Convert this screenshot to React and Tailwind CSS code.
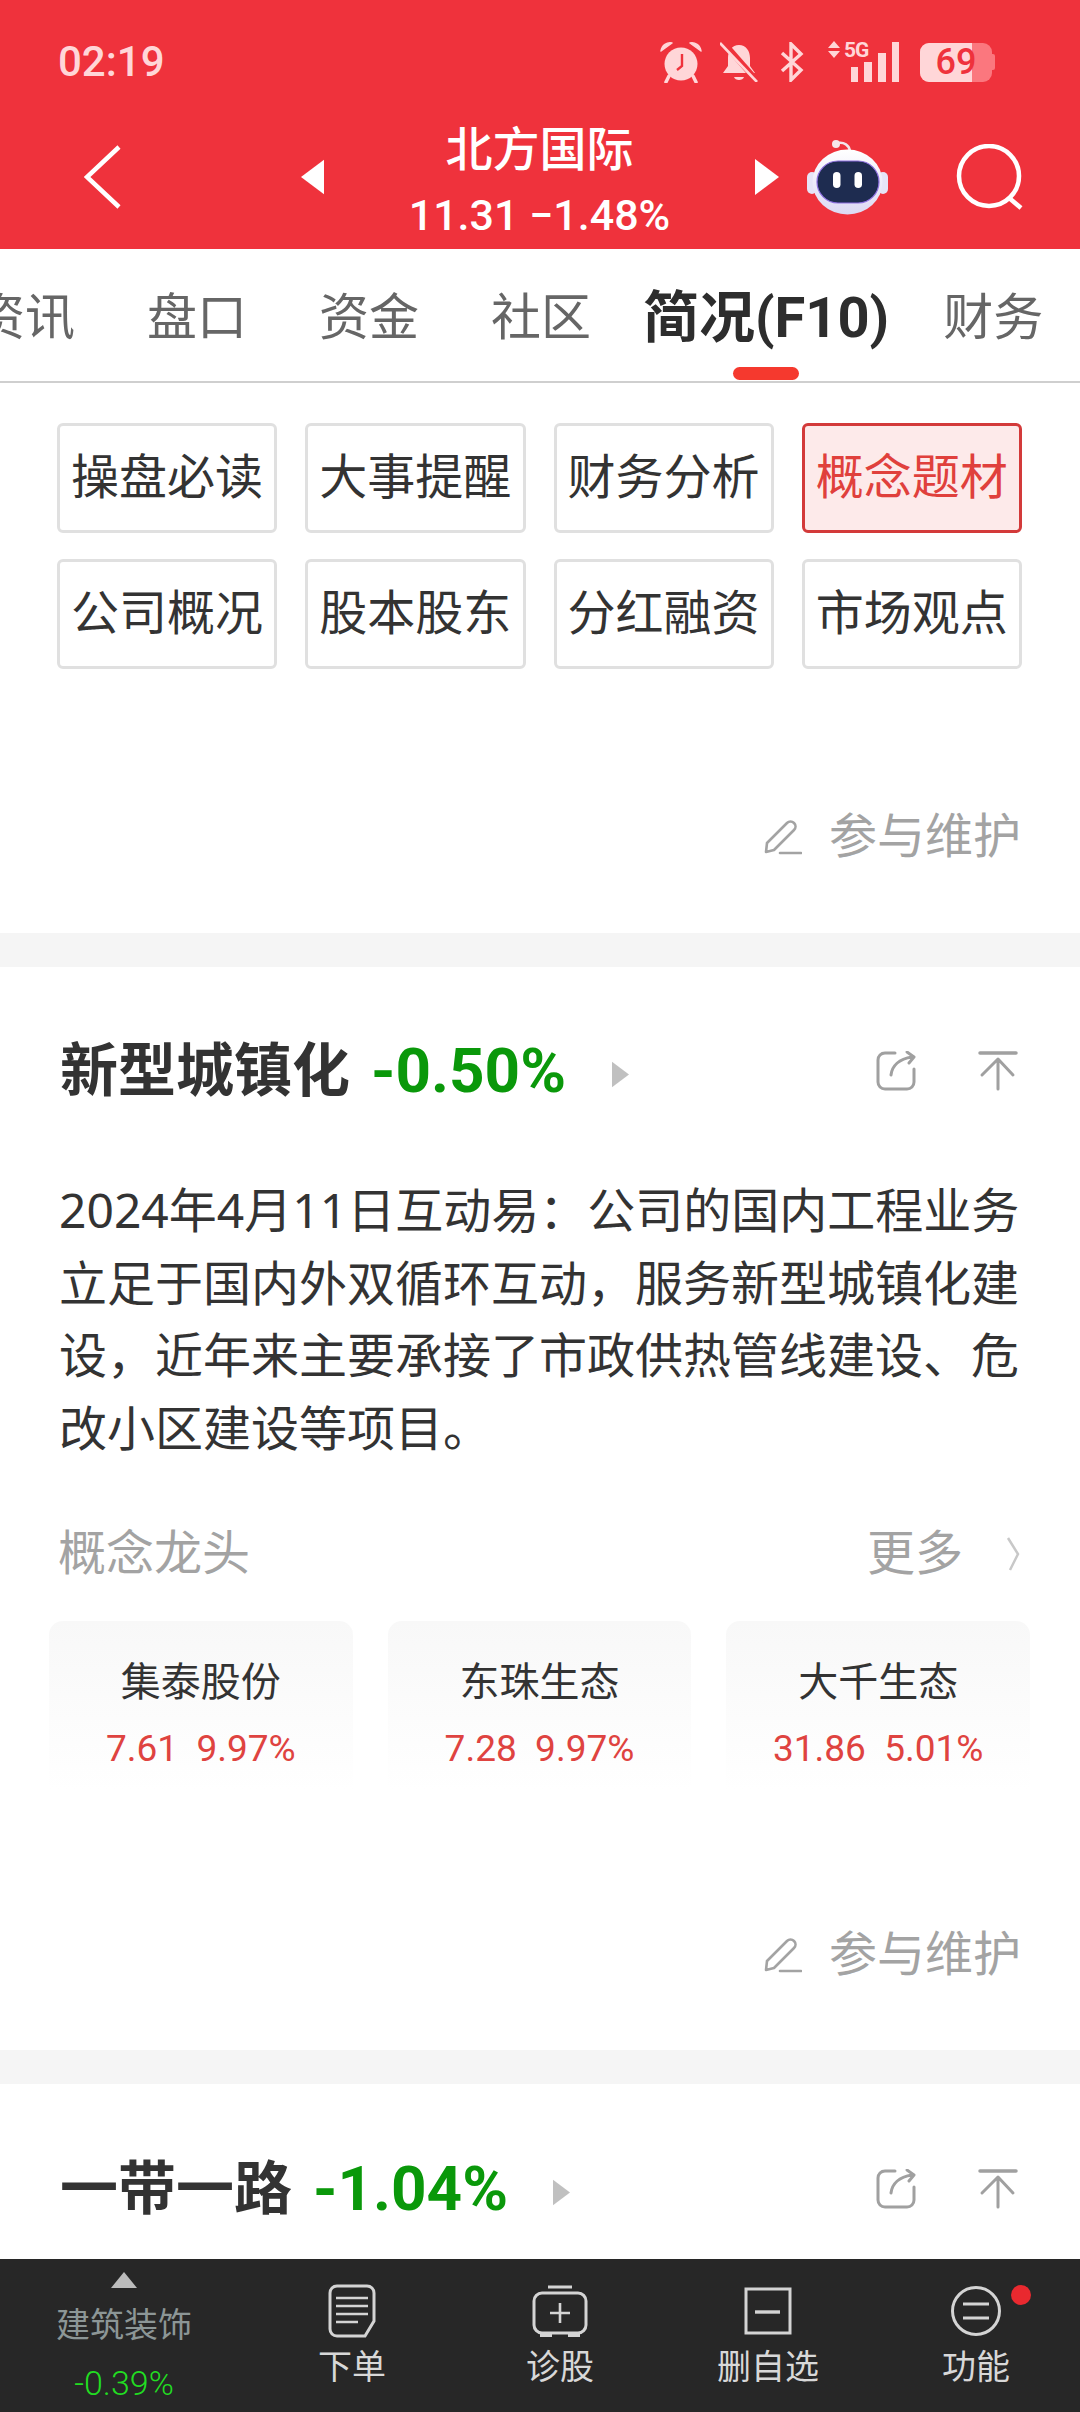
import React from 'react';

const tabs = [
  { label: '资讯' },
  { label: '盘口' },
  { label: '资金' },
  { label: '社区' },
  { label: '简况(F10)', active: true },
  { label: '财务' },
];

const shortcuts = ['操盘必读', '大事提醒', '财务分析', '概念题材', '公司概况', '股本股东', '分红融资', '市场观点'];

const leaders = [
  { name: '集泰股份', price: '7.61', pct: '9.97%' },
  { name: '东珠生态', price: '7.28', pct: '9.97%' },
  { name: '大千生态', price: '31.86', pct: '5.01%' },
];

function Triangle({ dir = 'right', className, fill = '#fff' }) {
  return (
    <svg viewBox="0 0 24 36" className={className}>
      <path d={dir === 'right' ? 'M0 0 L24 18 L0 36 Z' : 'M24 0 L0 18 L24 36 Z'} fill={fill} />
    </svg>
  );
}

function StatusIcons() {
  const c = '#ffd6d8';
  return (
    <div className="ml-auto flex items-center">
      {/* alarm */}
      <svg width="42" height="42" viewBox="0 0 42 42">
        <circle cx="21" cy="23" r="16.5" fill={c} />
        <path d="M1 10 C2 4 7 1 12 2 Z M41 10 C40 4 35 1 30 2 Z" fill={c} stroke={c} strokeWidth="1.5" strokeLinejoin="round" />
        <path d="M9 35 L6 41 M33 35 L36 41" stroke={c} strokeWidth="3.5" strokeLinecap="round" />
        <path d="M22 13 V25 L17 29" stroke="#ef323c" strokeWidth="2.4" fill="none" />
      </svg>
      {/* muted bell */}
      <svg width="38" height="40" viewBox="0 0 38 40" className="ml-[18px]">
        <path d="M19 3 C26 3 30 9 30 16 V24 L35 31 H3 L8 24 V16 C8 9 12 3 19 3 Z" fill={c} />
        <path d="M14 35 H24 C23 39 15 39 14 35 Z" fill={c} />
        <path d="M2 -1 L37 39" stroke="#ef323c" strokeWidth="6" />
        <path d="M0 1 L37 40" stroke={c} strokeWidth="2.6" />
      </svg>
      {/* bluetooth */}
      <svg width="24" height="40" viewBox="0 0 24 40" className="ml-[22px]">
        <path d="M2 11 L21 28 L11 38 V2 L21 12 L2 29" fill="none" stroke={c} strokeWidth="3.4" />
      </svg>
      {/* data arrows */}
      <svg width="12" height="17" viewBox="0 0 12 17" className="ml-[24px] self-start">
        <path d="M6 0 L12 7 H0 Z M0 10 H12 L6 17 Z" fill={c} />
      </svg>
      {/* signal bars */}
      <div className="relative ml-[11px] flex h-[40px] w-[51px] items-end gap-[6px]">
        <span className="h-[15px] w-[7px] bg-[#ffd6d8]" />
        <span className="h-[20px] w-[8px] bg-[#ffd6d8]" />
        <span className="h-[29px] w-[8px] bg-[#ffd6d8]" />
        <span className="h-[40px] w-[7px] bg-[#ffd6d8]" />
        <span className="absolute -left-[7px] -top-[3px] text-[21px] leading-[22px] font-bold tracking-[-1px] text-[#ffd6d8]">5G</span>
      </div>
      {/* battery */}
      <div className="relative ml-[18px] flex h-[39px] w-[72px] overflow-hidden rounded-[9px] bg-[#fb777e]">
        <span className="w-[52px] bg-[#ffd6d8]" />
        <span className="absolute inset-0 flex items-center justify-center text-[36px] leading-none font-medium text-[#ef323c]">69</span>
      </div>
      <span className="h-[16px] w-[3px] rounded-r-[2px] bg-[#fb777e]" />
    </div>
  );
}

function Robot() {
  return (
    <svg width="82" height="76" viewBox="0 0 82 76" className="ml-[28px]">
      <defs>
        <linearGradient id="shell" x1="0" y1="0" x2="0" y2="1">
          <stop offset="0" stopColor="#ffffff" />
          <stop offset="1" stopColor="#dcd9f3" />
        </linearGradient>
      </defs>
      <path d="M31 4 C37 3 42 6 43 12" stroke="#f3e4ea" strokeWidth="2.5" fill="none" />
      <circle cx="29" cy="5" r="4" fill="#f6e6ea" />
      <rect x="0" y="33" width="10" height="22" rx="5" fill="#e6e4f7" />
      <rect x="71" y="33" width="10" height="22" rx="5" fill="#e6e4f7" />
      <ellipse cx="40.5" cy="43" rx="35" ry="32.5" fill="url(#shell)" />
      <rect x="10" y="22" width="62" height="42" rx="21" fill="#1e2c50" stroke="#8d6fe0" strokeWidth="1.2" />
      <rect x="26" y="33" width="7.5" height="16" rx="3.75" fill="#fff" />
      <rect x="47.5" y="33" width="7.5" height="16" rx="3.75" fill="#fff" />
    </svg>
  );
}

function Header() {
  return (
    <header className="flex h-[249px] shrink-0 flex-col bg-[#ef323c] text-white">
      <div className="flex h-[124px] items-center pl-[58px] pr-[85px]">
        <span className="text-[42px] leading-none font-medium text-[#ffd6d8]">02:19</span>
        <StatusIcons />
      </div>
      <div className="flex h-[106px] items-center pl-[84px]">
        <svg width="38" height="64" viewBox="0 0 38 64">
          <path d="M35 2 L3 32 L35 62" fill="none" stroke="#fff" strokeWidth="4.5" />
        </svg>
        <Triangle dir="left" className="ml-[179px] h-[36px] w-[23px]" />
        <div className="flex h-[106px] w-[431px] flex-col items-center self-start">
          <span className="h-[52px] text-[47px] leading-[52px] font-medium">北方国际</span>
          <span className="mt-[13px] h-[52px] text-[43px] leading-[52px] font-medium">11.31 −1.48%</span>
        </div>
        <Triangle className="h-[36px] w-[24px]" />
        <Robot />
        <svg width="68" height="66" viewBox="0 0 68 66" className="ml-[67px]">
          <circle cx="33" cy="32" r="30" fill="none" stroke="#fff" strokeWidth="4.5" />
          <path d="M52 53 L65 64" stroke="#fff" strokeWidth="4.5" />
        </svg>
      </div>
    </header>
  );
}

function Tabs() {
  return (
    <nav className="flex h-[134px] shrink-0 items-center gap-[72px] overflow-hidden border-b-2 border-[#cfcfcf] pt-[5px]">
      {tabs.map((tab, i) =>
        tab.active ? (
          <div key={tab.label} className="relative -ml-[20px] -mr-[18px] flex h-full shrink-0 items-center">
            <span className="text-[56px] leading-none font-bold text-[#2d2d2d]">{tab.label}</span>
            <span className="absolute bottom-[1px] left-[90px] h-[13px] w-[66px] rounded-full bg-[#f5392e]" />
          </div>
        ) : (
          <span key={tab.label} className={`shrink-0 text-[50px] leading-none text-[#666] ${i === 0 ? '-ml-[25px]' : ''}`}>
            {tab.label}
          </span>
        )
      )}
    </nav>
  );
}

function MaintainRow({ className }) {
  return (
    <div className={`flex h-[72px] items-center justify-end gap-[27px] pr-[59px] ${className}`}>
      <svg width="38" height="36" viewBox="0 0 38 36">
        <path d="M2 33 L3 24 L23 4 C25 2 28 2 30 4 C32 6 32 9 30 11 L10 31 Z" fill="none" stroke="#a3a3a3" strokeWidth="2.6" strokeLinejoin="round" />
        <path d="M16 34 H37" stroke="#a3a3a3" strokeWidth="2.6" strokeLinecap="round" />
      </svg>
      <span className="text-[48px] leading-none text-[#a3a3a3]">参与维护</span>
    </div>
  );
}

function ConceptTitle({ name, pct, gap }) {
  return (
    <div className="flex h-[80px] items-center pl-[60px] pr-[62px]">
      <span className="text-[58px] leading-none font-bold text-[#333]">{name}</span>
      <span className="ml-[21px] text-[62px] leading-none font-bold text-[#0a980a]">{pct}</span>
      <Triangle fill="#c0c0c0" className={`mt-[6px] h-[27px] w-[17px] ${gap}`} />
      {/* share */}
      <svg width="40" height="40" viewBox="0 0 40 40" className="ml-auto">
        <path d="M19 2 H9 C5 2 2 5 2 9 V31 C2 35 5 38 9 38 H31 C35 38 38 35 38 31 V18" fill="none" stroke="#a0a0a0" strokeWidth="3" strokeLinecap="round" />
        <path d="M15 24 C16 15 23 8 36 6 M31 1 L38 6 L33 12" fill="none" stroke="#a0a0a0" strokeWidth="3" strokeLinecap="round" strokeLinejoin="round" />
      </svg>
      {/* back to top */}
      <svg width="40" height="40" viewBox="0 0 40 40" className="ml-[62px]">
        <path d="M2 2 H38" stroke="#a0a0a0" strokeWidth="3.5" strokeLinecap="round" />
        <path d="M20 38 V8 M4 24 L20 8 L35 24" fill="none" stroke="#a0a0a0" strokeWidth="3" strokeLinecap="round" strokeLinejoin="round" />
      </svg>
    </div>
  );
}

function LeaderCard({ name, price, pct }) {
  return (
    <div className="flex h-[170px] flex-col items-center rounded-t-[14px] bg-gradient-to-b from-[#f8f8f8] to-white pt-[37px]">
      <span className="text-[40px] leading-[50px] text-[#333]">{name}</span>
      <span className="mt-[21px] whitespace-pre text-[37px] leading-[40px] text-[#df4340]">{price}  {pct}</span>
    </div>
  );
}

function BarItem({ label, badge, children }) {
  return (
    <div className="relative flex w-[208px] flex-col items-center pt-[25px]">
      <div className="flex h-[54px] items-center justify-center">{children}</div>
      <span className="mt-[9px] text-[34px] leading-[40px] text-[#d8d8d8]">{label}</span>
      {badge && <span className="absolute left-[139px] top-[26px] h-[20px] w-[20px] rounded-full bg-[#e9292f]" />}
    </div>
  );
}

function BottomBar() {
  const s = '#d4d4d4';
  return (
    <footer className="flex h-[153px] shrink-0 bg-[#272727]">
      <div className="flex w-[248px] flex-col items-center pt-[13px]">
        <svg width="26" height="16" viewBox="0 0 26 16">
          <path d="M13 0 L26 16 H0 Z" fill="#bcbcbc" />
        </svg>
        <span className="mt-[17px] text-[34px] leading-[40px] text-[#8c9696]">建筑装饰</span>
        <span className="mt-[18px] text-[34px] leading-[40px] font-light text-[#22dd22]">-0.39%</span>
      </div>
      <BarItem label="下单">
        <svg width="48" height="54" viewBox="0 0 48 54">
          <path d="M9 2 H39 C43 2 46 5 46 9 V37 L37 52 H9 C5 52 2 49 2 45 V9 C2 5 5 2 9 2 Z" fill="none" stroke={s} strokeWidth="3" />
          <path d="M8 14 H40 M8 22 H40 M8 30 H40 M8 38 H30" stroke={s} strokeWidth="2.6" />
        </svg>
      </BarItem>
      <BarItem label="诊股">
        <svg width="56" height="52" viewBox="0 0 56 52">
          <path d="M16 2 H40" stroke={s} strokeWidth="3" />
          <rect x="2" y="8" width="52" height="40" rx="8" fill="none" stroke={s} strokeWidth="3" />
          <path d="M8 50 H20 M36 50 H48" stroke={s} strokeWidth="4" />
          <path d="M28 18 V38 M18 28 H38" stroke={s} strokeWidth="2.6" />
        </svg>
      </BarItem>
      <BarItem label="删自选">
        <svg width="48" height="48" viewBox="0 0 48 48">
          <rect x="2" y="2" width="44" height="44" fill="none" stroke={s} strokeWidth="3" />
          <path d="M11 25 H36" stroke={s} strokeWidth="3.4" />
        </svg>
      </BarItem>
      <BarItem label="功能" badge>
        <svg width="50" height="50" viewBox="0 0 50 50">
          <circle cx="25" cy="25" r="23.5" fill="none" stroke={s} strokeWidth="3" />
          <path d="M12 18 H38 M12 32 H38" stroke={s} strokeWidth="3" />
        </svg>
      </BarItem>
    </footer>
  );
}

export default function App() {
  return (
    <div className="flex h-[2412px] w-[1080px] flex-col overflow-hidden bg-white font-['Roboto','Noto_Sans_CJK_SC',sans-serif]">
      <Header />
      <Tabs />
      <main className="min-h-0 flex-1 overflow-hidden">
        <section>
          <div className="grid grid-cols-4 gap-x-[28px] gap-y-[26px] pl-[57px] pr-[58px] pt-[40px]">
            {shortcuts.map((label) => (
              <button
                key={label}
                type="button"
                className={`h-[110px] rounded-[6px] border-[3px] text-[48px] leading-none ${
                  label === '概念题材'
                    ? 'border-[#d33a3a] bg-[#fdeaea] text-[#e0403c]'
                    : 'border-[#e0e0e0] bg-white text-[#333]'
                }`}
              >
                {label}
              </button>
            ))}
          </div>
          <MaintainRow className="mt-[132px] mb-[60px]" />
        </section>

        <div className="h-[34px] bg-[#f5f5f5]" />

        <section className="pt-[64px]">
          <ConceptTitle name="新型城镇化" pct="-0.50%" gap="ml-[46px]" />
          <p className="mt-[63px] pl-[59px] pr-[57px] font-['Noto_Sans','Noto_Sans_CJK_SC',sans-serif] text-[48px] leading-[72.5px] text-[#333]">
            2024年4月11日互动易：公司的国内工程业务立足于国内外双循环互动，服务新型城镇化建设，近年来主要承接了市政供热管线建设、危改小区建设等项目。
          </p>
          <div className="mt-[60px] flex h-[60px] items-center pl-[58px] pr-[60px]">
            <span className="text-[48px] leading-none text-[#a3a3a3]">概念龙头</span>
            <span className="ml-auto text-[48px] leading-none text-[#a3a3a3]">更多</span>
            <svg width="14" height="34" viewBox="0 0 14 34" className="ml-[43px]">
              <path d="M2 1 L12 17 L4 33" fill="none" stroke="#c8c8c8" strokeWidth="2.5" />
            </svg>
          </div>
          <div className="mt-[37px] grid grid-cols-3 gap-x-[35px] pl-[49px] pr-[50px]">
            {leaders.map((item) => (
              <LeaderCard key={item.name} {...item} />
            ))}
          </div>
          <MaintainRow className="mt-[128px] mb-[59px]" />
        </section>

        <div className="h-[34px] bg-[#f5f5f5]" />

        <section className="pt-[65px]">
          <ConceptTitle name="一带一路" pct="-1.04%" gap="ml-[45px]" />
        </section>
      </main>
      <BottomBar />
    </div>
  );
}
